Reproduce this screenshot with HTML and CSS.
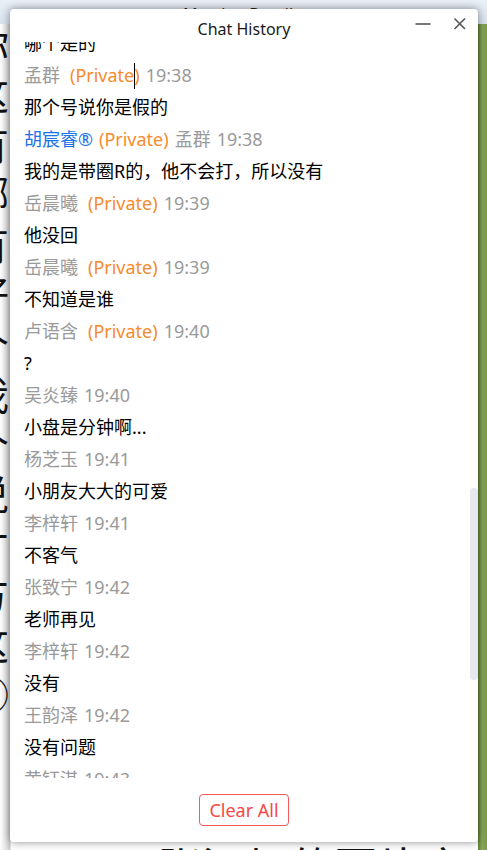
FILE: index.html
```html
<!DOCTYPE html>
<html lang="zh">
<head>
<meta charset="utf-8">
<title>Chat History</title>
<link rel="stylesheet" href="styles.css">
</head>
<body>
<div class="desktop">
  <div class="app-title">Meeting Detail</div>
  <div class="app-main">
    <div class="big-col">
      <span>你</span><span>这</span><span>有</span><span>哪</span><span>有</span><span>好</span><span>个</span><span>我</span><span>个</span><span>说</span><span>才</span><span>方</span><span>这</span><span>③</span>
    </div>
    <div class="bottom-text">R 一张添加的图片字</div>
  </div>
  <div class="green"></div>
</div>

<div class="window">
  <div class="win-header">
    <div></div>
    <div class="win-title">Chat History</div>
    <div class="win-controls">
      <svg class="icon" width="20" height="20" viewBox="0 0 20 20"><path d="M2.5 10H17.5" stroke="#555" stroke-width="1.6"/></svg>
      <svg class="icon" width="20" height="20" viewBox="0 0 20 20"><path d="M4.5 4.5L15 15M15 4.5L4.5 15" stroke="#555" stroke-width="1.6"/></svg>
    </div>
  </div>
  <div class="list">
    <div class="list-inner">
      <div class="msg first">哪个是的</div>
      <div class="meta"><span class="name me">孟群</span><span class="priv">(Private<i class="caret"></i>)</span><span class="time">19:38</span></div>
      <div class="msg">那个号说你是假的</div>
      <div class="meta"><span class="name blue">胡宸睿®</span><span class="priv">(Private)</span><span class="name">孟群</span><span class="time">19:38</span></div>
      <div class="msg">我的是带圈R的，他不会打，所以没有</div>
      <div class="meta"><span class="name me">岳晨曦</span><span class="priv">(Private)</span><span class="time">19:39</span></div>
      <div class="msg">他没回</div>
      <div class="meta"><span class="name me">岳晨曦</span><span class="priv">(Private)</span><span class="time">19:39</span></div>
      <div class="msg">不知道是谁</div>
      <div class="meta"><span class="name me">卢语含</span><span class="priv">(Private)</span><span class="time">19:40</span></div>
      <div class="msg">?</div>
      <div class="meta"><span class="name">吴炎臻</span><span class="time">19:40</span></div>
      <div class="msg">小盘是分钟啊...</div>
      <div class="meta"><span class="name">杨芝玉</span><span class="time">19:41</span></div>
      <div class="msg">小朋友大大的可爱</div>
      <div class="meta"><span class="name">李梓轩</span><span class="time">19:41</span></div>
      <div class="msg">不客气</div>
      <div class="meta"><span class="name">张致宁</span><span class="time">19:42</span></div>
      <div class="msg">老师再见</div>
      <div class="meta"><span class="name">李梓轩</span><span class="time">19:42</span></div>
      <div class="msg">没有</div>
      <div class="meta"><span class="name">王韵泽</span><span class="time">19:42</span></div>
      <div class="msg">没有问题</div>
      <div class="meta"><span class="name">黄钰淇</span><span class="time">19:43</span></div>
      <div class="msg">好的</div>
    </div>
    <div class="thumb"></div>
  </div>
  <div class="win-footer">
    <button class="clear-btn">Clear All</button>
  </div>
</div>
</body>
</html>
```

FILE: styles.css
```css
html, body {
  margin: 0;
  padding: 0;
}

body {
  width: 487px;
  height: 850px;
  overflow: hidden;
  position: relative;
  font-family: "Noto Sans", "Noto Sans CJK SC", sans-serif;
  background: #f0f0f0;
}

/* background application */
.desktop {
  display: grid;
  grid-template-columns: 478px 9px;
  grid-template-rows: 24px 826px;
  width: 487px;
  height: 850px;
}

.app-title {
  grid-column: 1 / 3;
  background: linear-gradient(#eaf0f7, #d8e2ee);
  color: #222;
  font-size: 16px;
  line-height: 24px;
  padding-left: 183px;
  padding-top: 2px;
  box-sizing: border-box;
}

.app-main {
  display: flex;
  flex-direction: column;
  justify-content: space-between;
  overflow: hidden;
  background: linear-gradient(to right, #ffffff 0px, #e4e4e4 6px, #c9c9c9 10px, #ffffff 11px);
}

.big-col {
  display: flex;
  flex-direction: column;
  margin-left: -31px;
  margin-top: -6px;
  font-family: "Noto Sans CJK SC", sans-serif;
  font-size: 40px;
  line-height: 50px;
  color: #111;
  width: 42px;
}

.bottom-text {
  font-family: "Noto Sans CJK SC", sans-serif;
  font-size: 44px;
  line-height: 44px;
  color: #111;
  padding-left: 76px;
  margin-bottom: -38px;
  white-space: nowrap;
}

.green {
  background: linear-gradient(to right, #5f7d35, #8aa75a 4px, #7b9a4a);
}

/* chat history window */
.window {
  position: absolute;
  left: 10px;
  top: 9px;
  width: 468px;
  height: 833px;
  background: #fff;
  border-radius: 4px;
  box-shadow: 0 0 8px rgba(0, 0, 0, 0.45);
  display: flex;
  flex-direction: column;
}

.win-header {
  display: grid;
  grid-template-columns: 1fr auto 1fr;
  align-items: start;
  height: 33px;
  flex: none;
}

.win-title {
  font-size: 16px;
  line-height: 24px;
  margin-top: 8px;
  color: #1a1a1a;
}

.win-controls {
  display: flex;
  justify-content: flex-end;
  gap: 17px;
  padding-top: 5px;
  padding-right: 8px;
}

.icon {
  display: block;
}

.list {
  position: relative;
  height: 736px;
  overflow: hidden;
  flex: none;
}

.list-inner {
  padding-left: 14px;
  margin-top: -15px;
}

.meta,
.msg {
  font-size: 18px;
  line-height: 32px;
  white-space: nowrap;
}

.msg {
  color: #000;
}

.meta {
  color: #9a9a9a;
}

.name {
  margin-right: 6px;
}

.name.me {
  margin-right: 10px;
}

.name.blue {
  color: #1a73e8;
}

.priv {
  color: #f98a2c;
  margin-right: 6px;
}

.caret {
  display: inline-block;
  width: 1px;
  height: 26px;
  background: #000;
  vertical-align: -7px;
  margin-right: -1px;
}

.thumb {
  position: absolute;
  right: 0;
  top: 446px;
  width: 8px;
  height: 192px;
  border-radius: 4px;
  background: #e7e7ee;
}

.win-footer {
  flex: 1;
  display: flex;
  justify-content: center;
  align-items: flex-start;
  padding-top: 16px;
}

.clear-btn {
  font-family: "Noto Sans", sans-serif;
  font-size: 18px;
  line-height: 22px;
  color: #f24a4a;
  background: #fff;
  border: 1px solid #f45a5a;
  border-radius: 4px;
  width: 90px;
  height: 32px;
  padding: 0;
}
```
